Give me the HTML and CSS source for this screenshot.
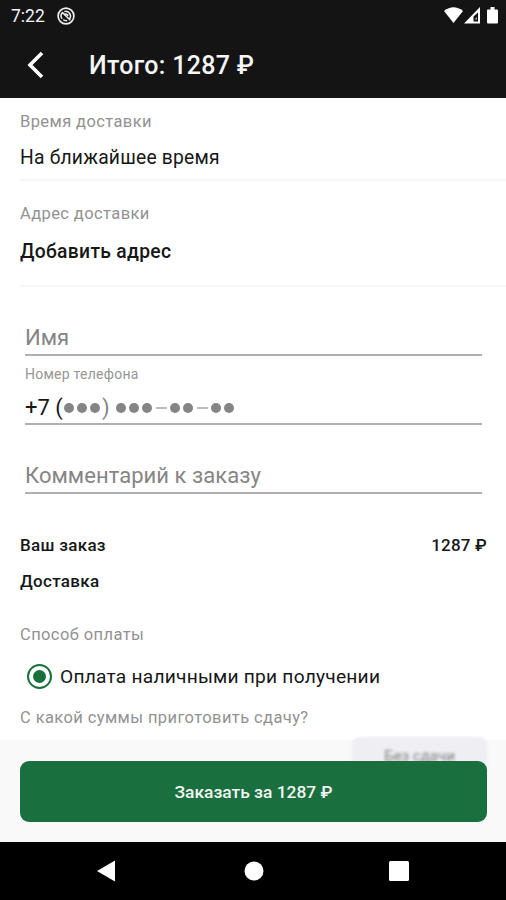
FILE: index.html
```html
<!DOCTYPE html>
<html lang="ru">
<head>
<meta charset="utf-8">
<title>Итого: 1287 ₽</title>
<link rel="stylesheet" href="styles.css">
</head>
<body>
<header class="header">
  <div class="status">
    <span class="clock">7:22</span>
    <svg class="status-app" width="18" height="18" viewBox="0 0 18 18" fill="none" stroke="#eee"><circle cx="9" cy="9" r="7.9" stroke-width="1.7"/><path d="M5.1 11.8A4.7 4.7 0 0 1 5.5 5.6M7.3 4.6A4.8 4.8 0 0 1 12.7 11.8M5 5l8.3 8.3M6.2 12.7a5 5 0 0 0 4 .9" stroke-width="1.5"/><path d="M7.2 8.2C8.2 6.4 10.8 7 10.8 9" stroke-width="1.5"/></svg>
    <svg class="status-signals" width="56" height="18" viewBox="0 0 56 18"><path d="M0 4Q9.5-3.5 19 4L9.5 16Z" fill="#fff"/><path d="M20 16.5 36 0V16.5Z" fill="#fff"/><path d="M29.5 14.5V9.5L34 5.5V14.5Z" fill="#141414"/><path d="M30.5 12.5 33 10v2.500Z" fill="#aaa"/><path d="M44 2.500h2.500V0h4v2.500H53a1 1 0 0 1 1 1V15.500a1 1 0 0 1-1 1H44a1 1 0 0 1-1-1V3.500a1 1 0 0 1 1-1Z" fill="#fff"/></svg>
  </div>
  <div class="appbar">
    <svg class="back" width="20" height="28" viewBox="0 0 20 28"><path d="M17 2 5 14 17 26" fill="none" stroke="#fff" stroke-width="3.6"/></svg>
    <h1 class="title">Итого: 1287 ₽</h1>
  </div>
</header>
<main class="content">
  <section class="info time">
    <div class="label label-time">Время доставки</div>
    <div class="value">На ближайшее время</div>
  </section>
  <section class="info address">
    <div class="label label-address">Адрес доставки</div>
    <div class="value strong">Добавить адрес</div>
  </section>
  <form class="fields">
    <div class="field name">Имя</div>
    <div class="field phone">
      <div class="hint">Номер телефона</div>
      <div class="mask"><span class="prefix">+7&nbsp;(</span><i></i><i></i><i></i><span class="close">)</span><i></i><i></i><i></i><b></b><i></i><i></i><b></b><i></i><i></i></div>
    </div>
    <div class="field comment">Комментарий к заказу</div>
  </form>
  <section class="summary">
    <div class="row"><span class="order">Ваш заказ</span><span class="price">1287 ₽</span></div>
    <div class="row"><span class="delivery">Доставка</span></div>
  </section>
  <section class="payment">
    <div class="label label-pay">Способ оплаты</div>
    <div class="option"><span class="radio"></span><span class="option-text">Оплата наличными при получении</span></div>
    <div class="label question">С какой суммы приготовить сдачу?</div>
    <div class="chip"><span>Без сдачи</span></div>
  </section>
  <footer class="footer"><div class="submit">Заказать за 1287 ₽</div></footer>
</main>
<nav class="nav">
  <svg width="18" height="22" viewBox="0 0 18 22"><path d="M0 11 18 .5V21.500Z" fill="#fff"/></svg>
  <svg width="20" height="20" viewBox="0 0 20 20"><circle cx="10" cy="10" r="9.500" fill="#fff"/></svg>
  <svg width="20" height="20" viewBox="0 0 20 20"><rect width="20" height="20" rx="1.500" fill="#fff"/></svg>
</nav>
</body>
</html>
```
FILE: styles.css
```css
* { box-sizing: border-box; }
body { margin: 0; height: 900px; display: flex; flex-direction: column; overflow: hidden; font-family: Roboto, "Noto Sans", sans-serif; color: #171717; background: #fff; white-space: nowrap; }
svg { display: block; flex: none; }
.header { height: 98px; background: #141414; color: #f5f5f5; }
.status { height: 32px; display: flex; align-items: center; padding: 0 8px 0 11px; }
.clock { font-size: 17.5px; width: 46px; }
.status-signals { margin-left: auto; margin-right: -2px; }
.appbar { height: 66px; display: flex; align-items: center; padding-left: 25px; }
.title { margin: 2px 0 0 44px; font-size: 25px; line-height: 30px; font-weight: 500; letter-spacing: 0.3px; }
.content { position: relative; height: 744px; overflow: hidden; }
.label { font-size: 16.5px; line-height: 20px; color: #929292; letter-spacing: 0.4px; }
.value { font-size: 19.3px; line-height: 24px; letter-spacing: 0.2px; }
.strong { font-weight: 500; letter-spacing: 0.3px; }
.info { margin-left: 20px; border-bottom: 2px solid #f5f5f5; }
.time { height: 83px; padding-top: 14px; }
.time .value { margin-top: 14px; }
.address { height: 106px; padding-top: 23px; }
.address .value { margin-top: 16px; }
.fields { margin: 0 24px 0 25px; }
.field { border-bottom: 2px solid #b0b0b0; font-size: 22px; line-height: 28px; color: #858585; }
.name { height: 69px; padding-top: 37px; }
.phone { height: 69px; padding-top: 9px; }
.comment { height: 69px; padding-top: 37px; letter-spacing: 0.05px; }
.hint { font-size: 14px; line-height: 18px; color: #969696; letter-spacing: 0.25px; }
.mask { display: flex; align-items: center; margin-top: 11px; height: 28px; }
.prefix { color: #171717; width: 39px; }
.mask i { width: 10px; height: 10px; border-radius: 50%; background: #858585; margin-right: 3px; }
.close { width: 14px; margin-left: -1px; }
.mask b { width: 11px; height: 2px; background: #bbb; margin: 0 3.5px 0 0.5px; }
.summary { padding: 39px 19px 0 20px; font-size: 17px; font-weight: 500; }
.row { display: flex; justify-content: space-between; height: 36px; line-height: 24px; letter-spacing: 0.3px; }
.price { letter-spacing: 0.2px; }
.payment { padding: 20px 19px 0 20px; }
.option { display: flex; align-items: center; height: 28px; margin-top: 17px; padding-left: 7px; }
.radio { width: 25px; height: 25px; border: 2.500px solid #19703d; border-radius: 50%; margin-right: 8px; display: grid; place-items: center; }
.radio::after { content: ""; width: 13px; height: 13px; border-radius: 50%; background: #19703d; }
.option-text { font-size: 19.2px; letter-spacing: 0.22px; }
.question { margin-top: 18px; }
.chip { margin: 9px 0 0 auto; width: 135px; height: 42px; padding-top: 8px; border-radius: 8px; background: #eeeef4; text-align: center; font-size: 15px; line-height: 22px; color: #333; filter: blur(0.8px); }
.footer { position: absolute; left: 0; right: 0; bottom: 0; height: 102px; padding: 21px 19px 20px 20px; background: rgba(240, 240, 242, 0.4); backdrop-filter: blur(0.8px); }
.submit { height: 61px; border-radius: 9px; background: #196f3d; color: #f5f5f5; text-align: center; font-size: 17.4px; line-height: 62px; font-weight: 500; }
.nav { height: 58px; background: #000; display: flex; align-items: center; padding-left: 97px; }
.nav svg + svg { margin-left: 129px; }
.nav svg:last-child { margin-left: 125px; }
```
